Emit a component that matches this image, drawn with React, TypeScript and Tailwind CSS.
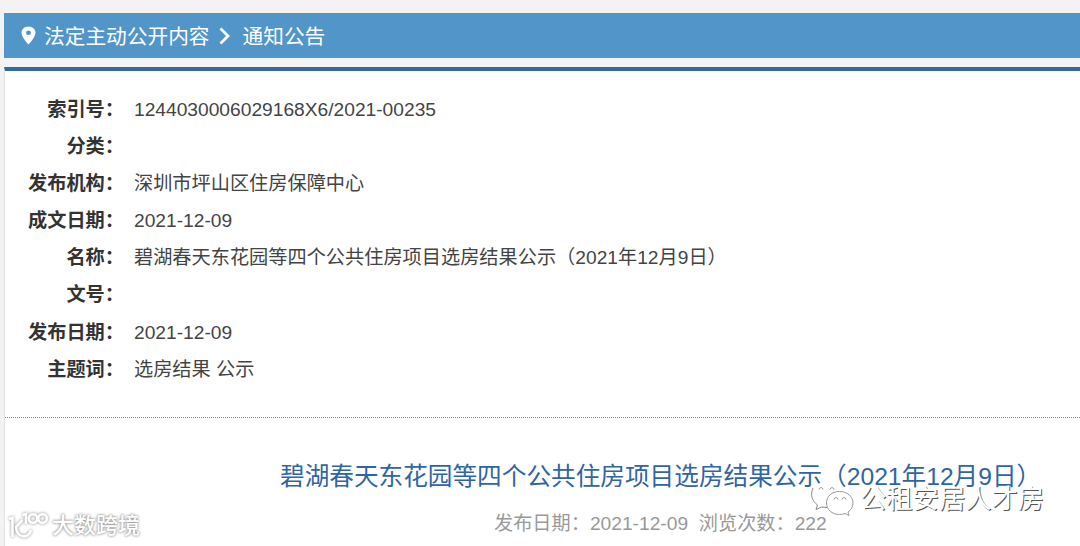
import { MdLocationOn } from "react-icons/md";

type Row = {
  label: string;
  value?: string;
}

const rows: Row[] = [
  { label: "索引号", value: "1244030006029168X6/2021-00235" },
  { label: "分类" },
  { label: "发布机构", value: "深圳市坪山区住房保障中心" },
  { label: "成文日期", value: "2021-12-09" },
  { label: "名称", value: "碧湖春天东花园等四个公共住房项目选房结果公示（2021年12月9日）" },
  { label: "文号" },
  { label: "发布日期", value: "2021-12-09" },
  { label: "主题词", value: "选房结果 公示" },
];

const Breadcrumb = () => {
  return (
    <nav className="flex h-[45px] items-center bg-[#5195c9] pl-[16px] text-[20.7px] leading-none text-white">
      <MdLocationOn className="mr-[7px] h-[19px] w-[17px] shrink-0" preserveAspectRatio="none" viewBox="3.5 1.5 17 21" />
      <a className="pt-[4px]">法定主动公开内容</a>
      <svg className="mt-[1px] mr-[13px] ml-[9px] h-[18px] w-[11px]" viewBox="0 0 11 18" fill="none" stroke="currentColor" strokeWidth="2.8">
        <path d="M1.5 1.5L9 9L1.5 16.5" />
      </svg>
      <a className="pt-[4px]">通知公告</a>
    </nav>
  );
}

const WechatMark = () => {
  return (
    <div className="absolute top-[480px] left-[810px] flex items-start">
      <svg className="h-[38px] w-[44px] shrink-0" viewBox="0 0 44 38" fill="none" strokeWidth="1">
        <path
          d="M18 1C9 1 1.500 7 1.500 14.500C1.500 19 4 23 7.500 25.500L6.500 29.500L11.500 27C14 28 17 28.300 19 28C31 27 35 20 34 12C32 5 26 1 18 1Z"
          fill="white"
          fillOpacity="0.85"
        />
        <path d="M3 8C0 15 2 21 7.500 25L6 29.500L11.500 27L17 27.500" stroke="#888" />
        <path d="M9 9.500C9.500 7 12.500 7 13 9.500M20 9.500C20.500 7 23.500 7 24 9.500" stroke="#888" />
        <path
          d="M29.500 11.500C21.500 11.500 16.500 16.500 16.500 23C16.500 29.500 22 34.500 29.500 34.500C31.500 34.500 33.500 34 35 33.500L39 35.500L38 32C41 30 43 27 43 23C43 16.500 37 11.500 29.500 11.500Z"
          fill="white"
          stroke="#999"
        />
        <path d="M24 19.500C24.500 17 27.500 17 28 19.500M32 19.500C32.500 17 35.500 17 36 19.500" stroke="#888" />
      </svg>
      <span className="mt-[4px] ml-[6px] text-[26.3px] leading-[30px] whitespace-nowrap text-white [text-shadow:1px_1px_0_#555]">
        公租安居人才房
      </span>
    </div>
  );
}

const SiteMark = () => {
  return (
    <div className="absolute top-[509px] left-[8px] flex items-start text-white">
      <svg
        className="h-[32px] w-[42px] shrink-0 drop-shadow-[0_0_1.5px_#888]"
        viewBox="0 0 42 32"
        fill="none"
        stroke="currentColor"
        strokeWidth="2.6"
      >
        <path d="M1 10L4.500 9V28M14.500 11L8 18M8 17C8.500 30 21 30 23 21" />
        <path d="M14.500 6L18 5V15" />
        <circle cx="25" cy="9.500" r="4.300" />
        <circle cx="34.500" cy="9.500" r="4.300" />
      </svg>
      <span className="mt-[2px] ml-[2px] text-[22px] leading-[30px] font-medium whitespace-nowrap [text-shadow:0_0_3px_#888,0_0_2px_#aaa]">
        大数跨境
      </span>
    </div>
  );
}

const App = () => {
  return (
    <div
      lang="zh-CN"
      className="relative h-[546px] w-full overflow-hidden bg-[#f3f3f3] pt-[13px] pl-[4px] font-['Liberation_Sans','Noto_Sans_CJK_SC',sans-serif]"
    >
      <Breadcrumb />
      <main className="mt-[9px] h-[480px] border-t-4 border-l border-t-[#336a9e] border-l-[#e2e2e2] bg-white">
        <dl className="h-[347px] border-b border-dotted border-b-[#5195c9] pt-[20px] text-[19.2px] text-[#333]">
          {rows.map((row) => (
            <div key={row.label} className="flex h-[37.1px] items-center leading-none">
              <dt className="w-[119px] text-right font-bold">{row.label}：</dt>
              <dd className="ml-[10px] whitespace-nowrap text-[#444]">{row.value}</dd>
            </div>
          ))}
        </dl>
        <h1 className="mt-[41px] pl-[275px] text-[24.65px] leading-[36px] whitespace-nowrap text-[#3065a3]">
          碧湖春天东花园等四个公共住房项目选房结果公示（2021年12月9日）
        </h1>
        <p className="mt-[15px] pl-[489px] text-[19.2px] leading-[28px] whitespace-pre text-[#999]">
          发布日期：2021-12-09{"  "}浏览次数：222
        </p>
      </main>
      <WechatMark />
      <SiteMark />
    </div>
  );
}

export default App
